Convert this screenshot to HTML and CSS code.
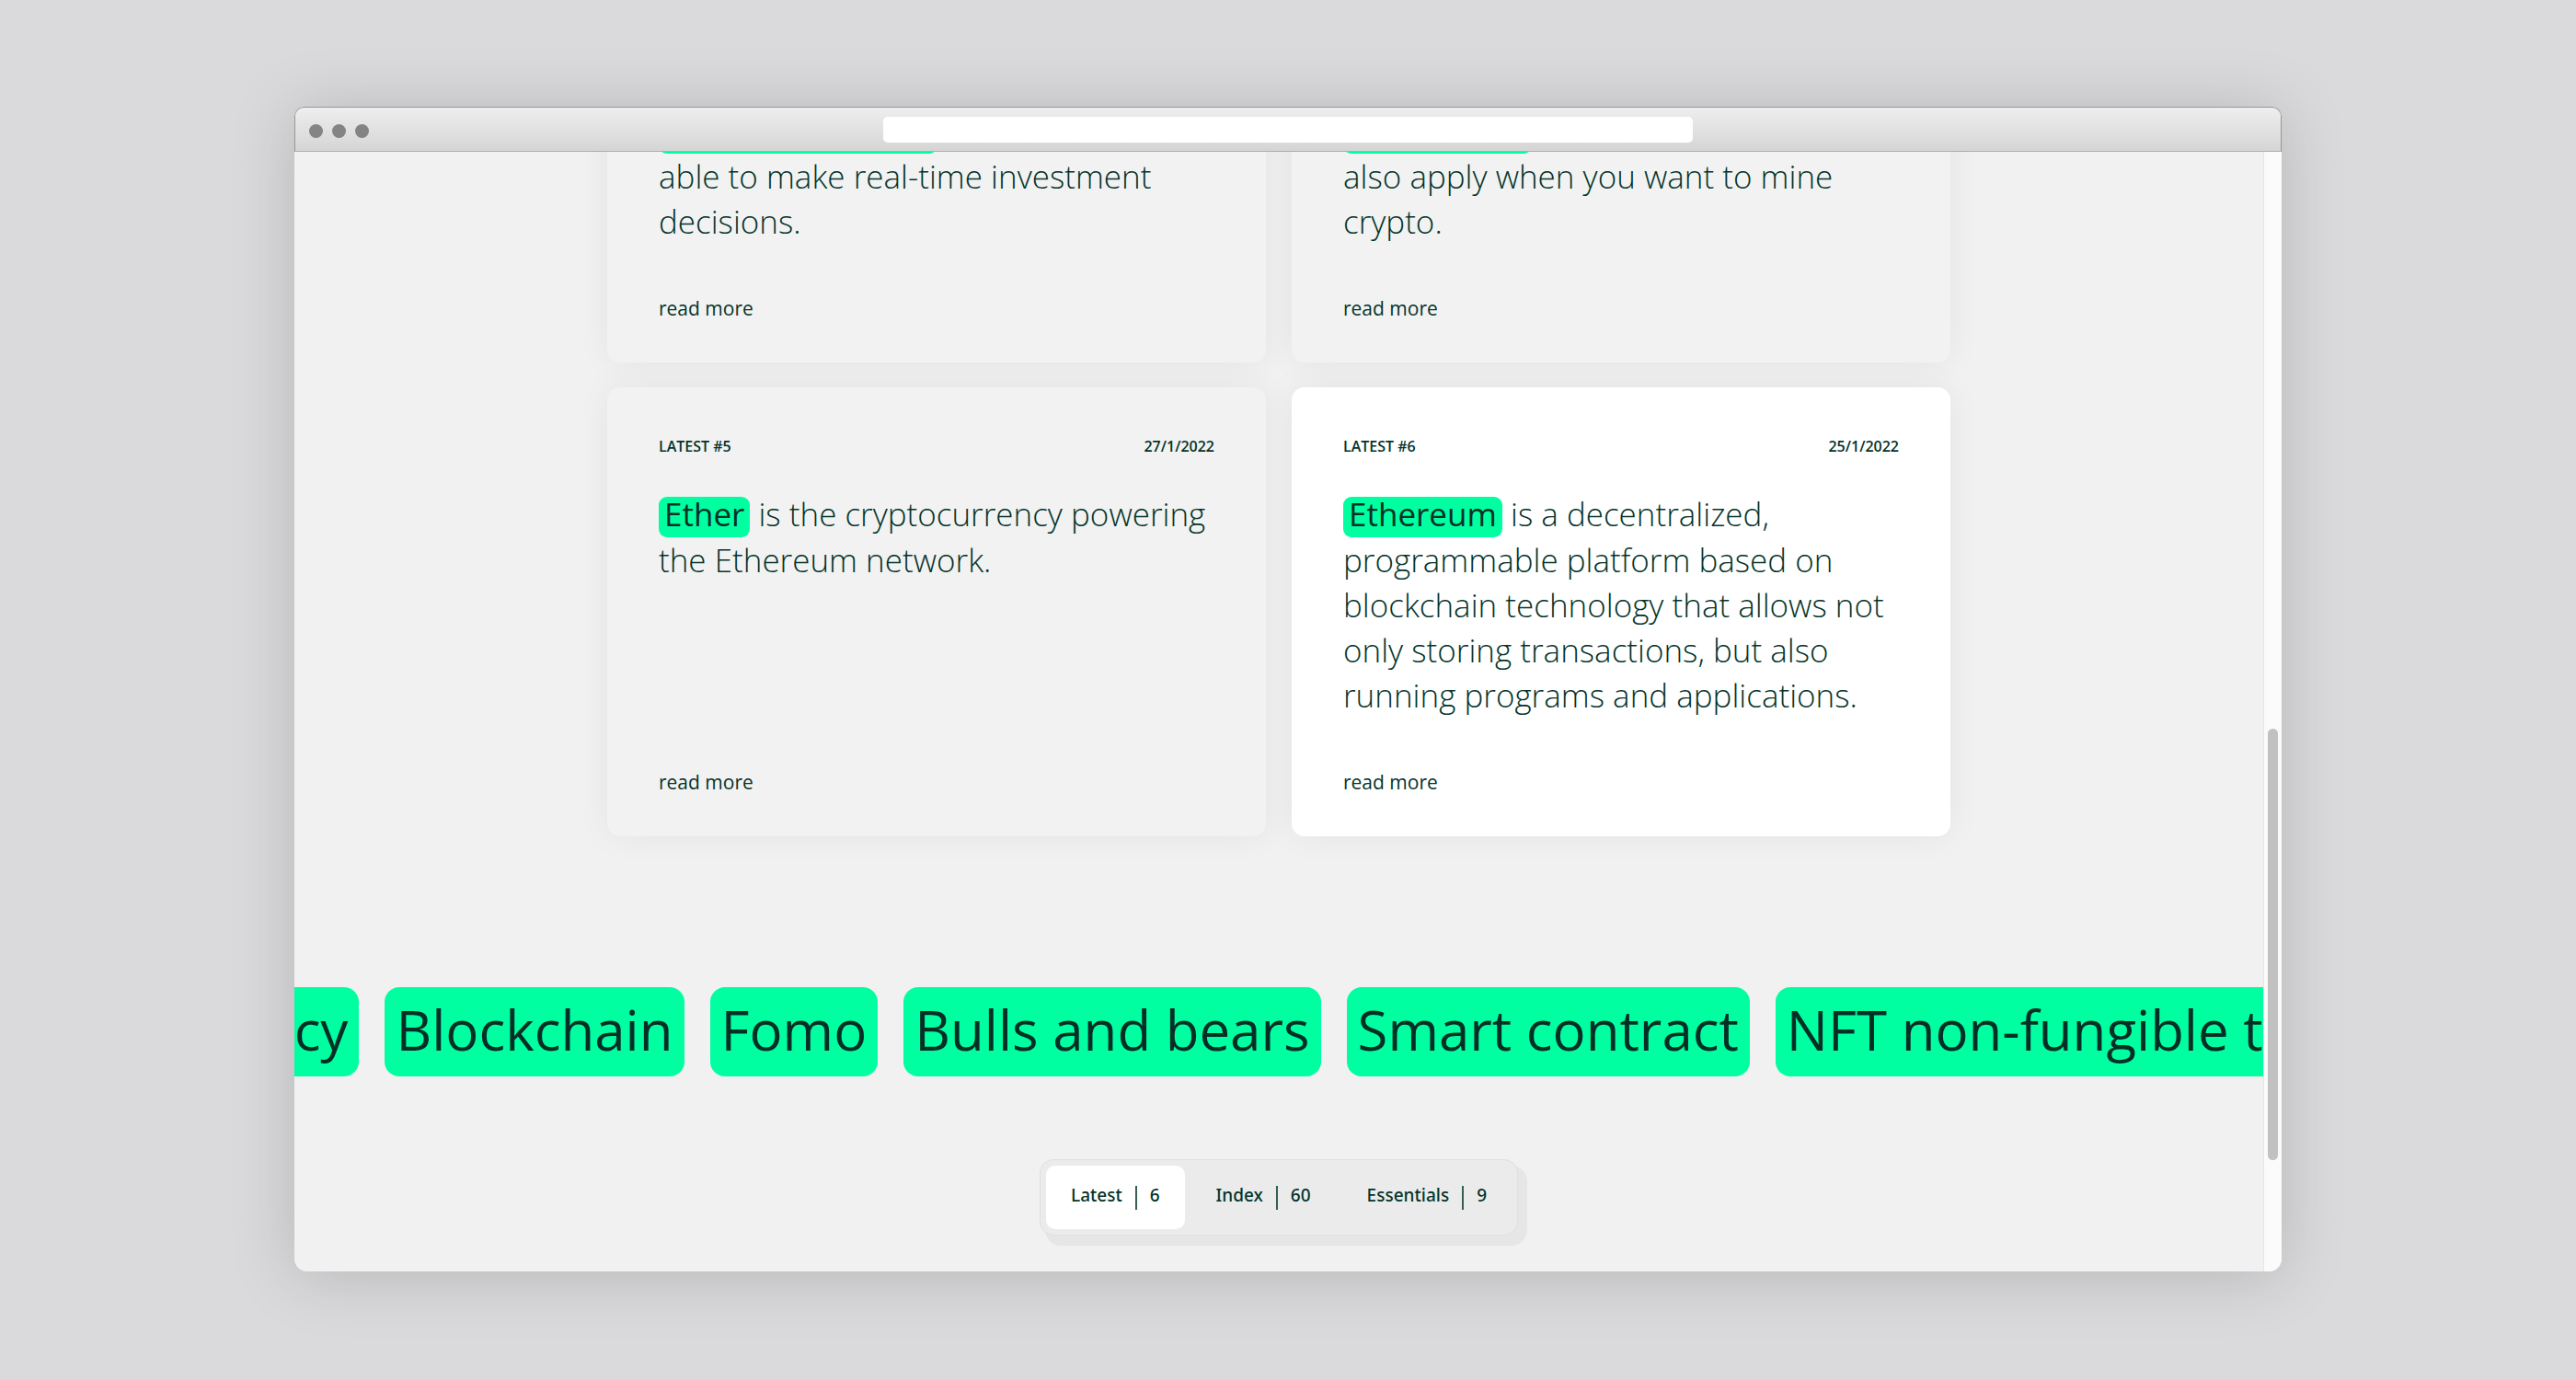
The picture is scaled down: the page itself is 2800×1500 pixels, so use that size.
FILE: index.html
```html
<!DOCTYPE html>
<html lang="en">
<head>
<meta charset="utf-8">
<title>Crypto glossary</title>
<link rel="stylesheet" href="styles.css">
</head>
<body>
<div class="window">
  <header class="titlebar">
    <div class="lights"><i class="light"></i><i class="light"></i><i class="light"></i></div>
    <input class="address" type="text" aria-label="Address">
  </header>
  <div class="viewport">
    <main class="page">
      <section class="cards">
        <article class="card">
          <p class="text"><mark class="term">Technical analysis</mark> is all about being able to make real-time investment decisions.</p>
          <a class="more" href="#">read more</a>
        </article>
        <article class="card">
          <p class="text"><mark class="term">Mining pool</mark> rules of collaboration also apply when you want to mine crypto.</p>
          <a class="more" href="#">read more</a>
        </article>
        <article class="card">
          <div class="meta"><span>LATEST #5</span><time>27/1/2022</time></div>
          <p class="text"><mark class="term">Ether</mark> is the cryptocurrency powering the Ethereum network.</p>
          <a class="more" href="#">read more</a>
        </article>
        <article class="card card-active">
          <div class="meta"><span>LATEST #6</span><time>25/1/2022</time></div>
          <p class="text"><mark class="term">Ethereum</mark> is a decentralized, programmable platform based on blockchain technology that allows not only storing transactions, but also running programs and applications.</p>
          <a class="more" href="#">read more</a>
        </article>
      </section>
      <section class="ticker">
        <a class="chip" href="#">Cryptocurrency</a>
        <a class="chip" href="#">Blockchain</a>
        <a class="chip" href="#">Fomo</a>
        <a class="chip" href="#">Bulls and bears</a>
        <a class="chip" href="#">Smart contract</a>
        <a class="chip" href="#">NFT non-fungible token</a>
      </section>
      <nav class="tabs">
        <button class="tab tab-active" type="button"><span>Latest</span><i class="bar"></i><span>6</span></button>
        <button class="tab" type="button"><span>Index</span><i class="bar"></i><span>60</span></button>
        <button class="tab" type="button"><span>Essentials</span><i class="bar"></i><span>9</span></button>
      </nav>
    </main>
    <div class="track"><div class="thumb"></div></div>
  </div>
</div>
</body>
</html>
```
FILE: styles.css
```css
* {
  box-sizing: border-box;
}

body {
  display: flex;
  height: 100vh;
  margin: 0;
  padding: 116px 320px 118px;
  background: #dadadc;
  color: #04342a;
  font-family: "Open Sans", "Noto Sans", sans-serif;
}

.window {
  display: flex;
  flex: 1;
  flex-direction: column;
  min-width: 0;
  border-radius: 10px 10px 14px 14px;
  box-shadow: 0 4px 70px rgba(0, 0, 0, 0.17);
  overflow: hidden;
}

.titlebar {
  display: grid;
  grid-template-columns: 1fr 880px 1fr;
  align-items: center;
  height: 49px;
  padding: 0 15px;
  border: 1px solid #979797;
  border-bottom-color: #adadad;
  border-radius: 10px 10px 0 0;
  background: linear-gradient(#eeeeee, #d5d5d5);
}

.lights {
  display: flex;
  gap: 10px;
  padding-top: 3px;
}

.light {
  width: 15px;
  height: 15px;
  border-radius: 50%;
  background: #848484;
}

.address {
  width: 100%;
  height: 28px;
  padding: 0 12px;
  border: 0;
  border-radius: 5px;
  background: #ffffff;
  font: 16px "Open Sans", sans-serif;
}

.viewport {
  display: flex;
  flex: 1;
  min-height: 0;
  background: #f1f1f1;
}

.page {
  display: flex;
  flex: 1;
  flex-direction: column;
  justify-content: flex-end;
  align-items: center;
  min-width: 0;
  padding-bottom: 39px;
  overflow: hidden;
}

.cards {
  display: grid;
  grid-template-columns: 1fr 1fr;
  gap: 27px 28px;
  width: 100%;
  max-width: 1460px;
}

.card {
  display: flex;
  flex-direction: column;
  padding: 53px 56px 45px;
  border-radius: 14px;
  background: #f2f2f2;
  box-shadow: 0 0 36px rgba(0, 0, 0, 0.06);
}

.card-active {
  background: #ffffff;
}

.meta {
  display: flex;
  justify-content: space-between;
  font-size: 16px;
  font-weight: 600;
  line-height: 22px;
}

.text {
  margin: 38px 0 56px;
  font-size: 35px;
  font-weight: 300;
  line-height: 49px;
}

.term {
  display: inline-block;
  padding: 0 6px 6px;
  border-radius: 9px;
  background: #00ffa0;
  color: #042f26;
  font-weight: 400;
  line-height: 38px;
}

.more {
  margin-top: auto;
  color: inherit;
  font-size: 21px;
  line-height: 28px;
  text-decoration: none;
}

.ticker {
  display: flex;
  align-self: stretch;
  gap: 28px;
  margin: 164px 0 90px -384px;
}

.chip {
  flex: none;
  padding: 0 12px 4px;
  border-radius: 16px;
  background: #00ffa0;
  color: #042f26;
  font-size: 60px;
  line-height: 93px;
  text-decoration: none;
}

.tabs {
  display: flex;
  gap: 7px;
  padding: 6px;
  border: 1px solid #dfdfdf;
  border-radius: 15px;
  background: #ebebeb;
  box-shadow: 8px 9px 0 2px #e6e6e6;
}

.tab {
  display: flex;
  align-items: center;
  gap: 14px;
  height: 69px;
  padding: 0 27px;
  border: 0;
  border-radius: 10px;
  background: none;
  color: inherit;
  font: 500 19px/24px "Noto Sans", sans-serif;
}

.tab span {
  padding-bottom: 5px;
}

.tab-active {
  background: #ffffff;
}

.bar {
  width: 2px;
  height: 26px;
  background: #35604f;
}

.track {
  display: grid;
  grid-template-rows: 627fr 469fr 121fr;
  justify-items: center;
  width: 20px;
  border-left: 1px solid #e6e6e6;
  background: #fbfbfb;
}

.thumb {
  grid-row: 2;
  width: 11px;
  border-radius: 6px;
  background: #c1c1c1;
}
```
